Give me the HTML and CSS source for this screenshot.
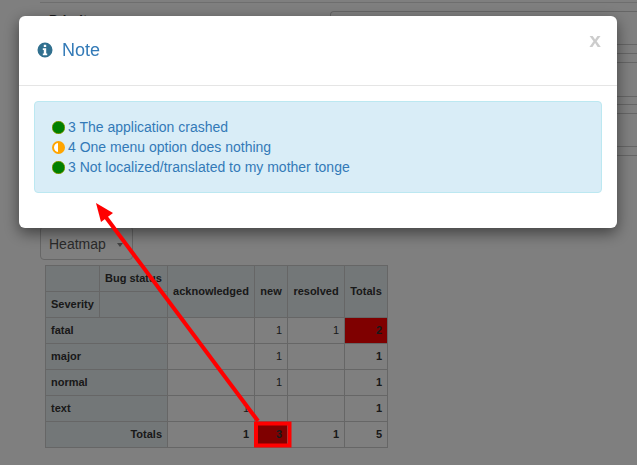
FILE: index.html
```html
<!DOCTYPE html>
<html lang="en">
<head>
<meta charset="utf-8">
<title>Note</title>
<link rel="stylesheet" href="styles.css">
</head>
<body>
<div class="page">
  <div class="top-rule"></div>
  <div class="form-row">
    <span class="form-label">Priority</span>
    <div class="form-input">
      <div class="line tall-a"></div><div class="line"></div><div class="line"></div>
      <div class="line tall-b"></div><div class="line short"></div><div class="line"></div>
      <div class="line tall-a"></div><div class="line"></div>
    </div>
  </div>
  <div class="select-box">Heatmap <span class="caret"></span></div>
  <table class="pivot">
    <colgroup><col class="c1"><col class="c2"><col class="c3"><col class="c4"><col class="c5"><col class="c6"></colgroup>
    <tr class="h1"><th></th><th class="center">Bug status</th><th rowspan="2">acknowledged</th><th rowspan="2">new</th><th rowspan="2">resolved</th><th rowspan="2">Totals</th></tr>
    <tr class="h1"><th>Severity</th><th></th></tr>
    <tr><th colspan="2">fatal</th><td></td><td>1</td><td>1</td><td class="total hot">2</td></tr>
    <tr><th colspan="2">major</th><td></td><td>1</td><td></td><td class="total">1</td></tr>
    <tr><th colspan="2">normal</th><td></td><td>1</td><td></td><td class="total">1</td></tr>
    <tr><th colspan="2">text</th><td>1</td><td></td><td></td><td class="total">1</td></tr>
    <tr><th colspan="2" class="right">Totals</th><td class="total">1</td><td class="total hot">3</td><td class="total">1</td><td class="total">5</td></tr>
  </table>
</div>

<div class="backdrop"></div>

<svg class="annotation" width="637" height="465" viewBox="0 0 637 465" aria-hidden="true">
  <rect x="256" y="423.500" width="33.500" height="22" fill="none" stroke="#ff0000" stroke-width="4"/>
  <line x1="258" y1="421" x2="102" y2="212" stroke="#ff0000" stroke-width="4"/>
  <polygon points="96,203 113,213 101,222" fill="#ff0000"/>
</svg>

<div class="modal">
  <div class="modal-header">
    <svg class="info" viewBox="0 0 16 16" aria-hidden="true"><path fill-rule="evenodd" d="M8 .5a7.500 7.500 0 1 0 0 15 7.500 7.500 0 0 0 0-15zM6.800 2.800h2.400v2.200H6.800zM5.800 6.300h3.400v5.200h1v1.700H5.800v-1.700h1V8H5.800z"/></svg>
    <h4 class="modal-title">Note</h4>
    <span class="close">x</span>
  </div>
  <div class="modal-body">
    <div class="alert">
      <div class="alert-row"><span class="dot green"></span>3 The application crashed</div>
      <div class="alert-row"><span class="dot half"></span>4 One menu option does nothing</div>
      <div class="alert-row"><span class="dot green"></span>3 Not localized/translated to my mother tonge</div>
    </div>
  </div>
</div>
</body>
</html>
```
FILE: styles.css
```css
* { box-sizing: border-box; }
html, body { margin: 0; height: 100%; overflow: hidden; }
body { font-family: "Liberation Sans", Arial, sans-serif; font-size: 14px; color: #333; background: #fff; }
.page { height: 465px; padding: 0 0 0 40px; overflow: hidden; }
.top-rule { height: 1px; margin: 2px 0 0; background: #ddd; }
.form-row { display: flex; align-items: flex-start; margin-top: 8px; height: 215px; }
.form-label { font-weight: 700; font-size: 13px; margin: 1px 0 0 9px; flex: 0 0 281px; }
.form-input { display: block; height: 145px; flex: 1; border: 1px solid #ccc; border-right: 0; border-bottom: 0; border-radius: 4px 0 0 0; }
.line { height: 9px; border-bottom: 1px solid #ccc; }
.line.tall-a { height: 33px; }
.line.tall-b { height: 34px; }
.line.short { height: 8px; }
.select-box { width: 93px; height: 34px; padding: 7px 8px 5px; border: 1px solid #ccc; border-radius: 4px; font-size: 14px; line-height: 20px; color: #555; }
.caret { display: inline-block; width: 0; height: 0; margin-left: 7px; vertical-align: 2px; border-top: 4px solid #888; border-left: 3px solid transparent; border-right: 3px solid transparent; }
.pivot { border-collapse: collapse; table-layout: fixed; width: 343px; margin: 5px 0 0 5px; font-size: 11px; color: #333; }
.c1 { width: 54px; } .c2 { width: 68px; } .c3 { width: 87px; } .c4 { width: 33px; } .c5 { width: 57px; } .c6 { width: 43px; }
.pivot tr { height: 26px; }
.pivot th, .pivot td { border: 1px solid #ccc; padding: 0 5px 2px; line-height: 14px; }
.pivot th { background: #e6eef0; font-weight: 700; text-align: left; }
.pivot th[rowspan] { text-align: center; padding: 0 0 1px; }
.pivot th.center { padding: 0 0 1px 5px; }
.pivot th.right { text-align: right; }
.pivot td { text-align: right; background: #fff; }
.pivot td.total { font-weight: 700; }
.pivot td.hot { background: #ff0000; }
.backdrop { position: fixed; inset: 0; background: rgba(0,0,0,.5); }
.annotation { position: fixed; left: 0; top: 0; z-index: 3; }
.modal { position: fixed; left: 19px; top: 16px; width: 598px; height: 212px; z-index: 2; background: #fff; border-radius: 6px; box-shadow: 0 5px 15px rgba(0,0,0,.5); }
.modal-header { display: flex; align-items: center; height: 70px; padding: 0 15px 2px 18px; border-bottom: 1px solid #e5e5e5; position: relative; }
.info { width: 16px; height: 16px; fill: #31708f; flex: none; }
.modal-title { margin: 0 0 0 9px; font-size: 18px; font-weight: 500; color: #337ab7; line-height: 20px; }
.close { position: absolute; right: 16px; top: 12px; font-size: 21px; font-weight: 700; color: #000; opacity: .2; line-height: 24px; }
.modal-body { padding: 15px; }
.alert { height: 92px; padding: 15px 16px 15px 17px; background: #d9edf7; border: 1px solid #bce8f1; border-radius: 4px; font-size: 14px; line-height: 20px; color: #337ab7; }
.alert-row { display: flex; align-items: center; }
.dot { width: 13px; height: 13px; border-radius: 50%; margin-right: 3px; flex: none; }
.dot.green { background: #008000; box-shadow: inset 0 0 0 .5px #b8a000; }
.dot.half { background: linear-gradient(90deg, #fff 50%, #ffa500 50%); border: 2px solid #ffa500; }
```
